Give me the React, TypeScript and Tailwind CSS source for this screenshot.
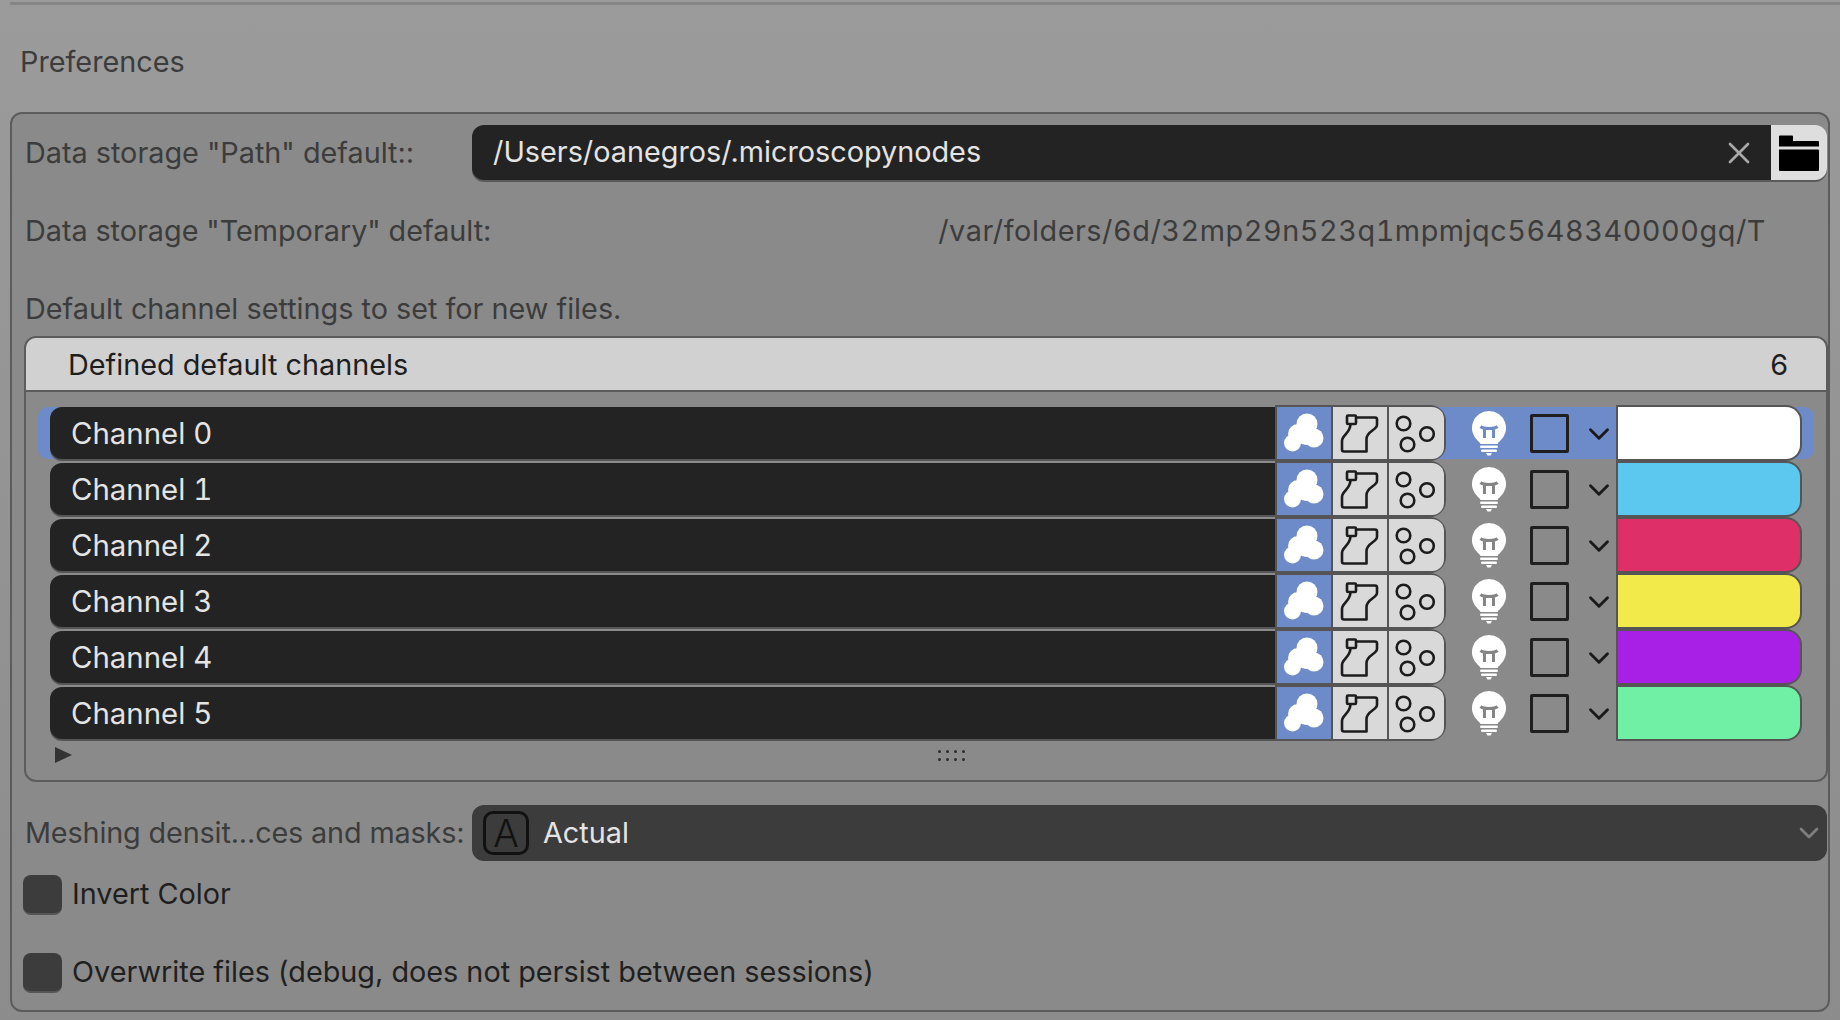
import { X, ChevronDown } from "lucide-react";

const channels = [
  { name: "Channel 0", swatch: "bg-[#ffffff]" },
  { name: "Channel 1", swatch: "bg-[#5cc8ef]" },
  { name: "Channel 2", swatch: "bg-[#de2f68]" },
  { name: "Channel 3", swatch: "bg-[#f2ea4b]" },
  { name: "Channel 4", swatch: "bg-[#a820e6]" },
  { name: "Channel 5", swatch: "bg-[#6ff0a5]" },
];

function VolumeIcon() {
  return (
    <svg width="54" height="52" viewBox="0 0 54 52" fill="#ffffff">
      <circle cx="30" cy="17" r="10.500" />
      <circle cx="15.500" cy="36" r="8.500" />
      <circle cx="37" cy="31" r="9.500" />
      <circle cx="21" cy="27" r="10" />
      <circle cx="29" cy="28" r="10" />
    </svg>
  );
}

function SurfaceIcon() {
  return (
    <svg width="54" height="52" viewBox="0 0 54 52" fill="none" stroke="#1c1c1c" strokeWidth="2.6" strokeLinejoin="round">
      <rect x="14" y="8.5" width="9" height="8.5" rx="1" />
      <path d="M23 10.5H42a2 2 0 0 1 2 2V18c0 5-10.500 6-10.500 14V44.500H11a2 2 0 0 1-2-2V34c0-6 8.500-8 8.500-17" />
    </svg>
  );
}

function PointsIcon() {
  return (
    <svg width="55" height="52" viewBox="0 0 55 52" fill="none" stroke="#1c1c1c" strokeWidth="2.600">
      <circle cx="14.500" cy="16.500" r="6.800" />
      <circle cx="38" cy="27" r="6.800" />
      <circle cx="18.500" cy="37.500" r="6.800" />
    </svg>
  );
}

function BulbIcon({ inner }: { inner: string }) {
  return (
    <svg width="40" height="52" viewBox="0 0 40 52" fill="#ffffff">
      <path d="M20 4a17 17 0 0 1 11 30c-1.500 1.300-2 2-2.500 3h-17c-.5-1-1-1.700-2.500-3A17 17 0 0 1 20 4Z" />
      <rect x="11" y="38.500" width="18" height="2.600" rx="1.300" />
      <rect x="12" y="42.500" width="16" height="2.600" rx="1.300" />
      <path d="M17 46h6l-1.500 2.500h-3Z" />
      <path d="M11.500 19.500c3 2.500 14 2.500 17 0M15.500 21.500V31M24.500 21.500V31" fill="none" stroke={inner} strokeWidth="3" />
    </svg>
  );
}

function FolderIcon() {
  return (
    <svg width="42" height="38" viewBox="0 0 42 38" fill="#000000">
      <path d="M1 2.500a1 1 0 0 1 1-1H14a1 1 0 0 1 1 1V7H40a1 1 0 0 1 1 1v4.500H1Z" />
      <path d="M1 15.500H40a1 1 0 0 1 1 1V36a1 1 0 0 1-1 1H2a1 1 0 0 1-1-1Z" />
    </svg>
  );
}

function ChannelRow({ name, swatch, active }: { name: string; swatch: string; active: boolean }) {
  return (
    <div className={`flex h-[52px] mx-[12px] pl-[12px] pr-[14px] rounded-[10px] ${active ? "bg-[#6d8ac9]" : ""}`}>
      <div className="flex-1 flex items-center pl-[21px] pt-[2px] bg-[#232323] rounded-l-[12px] text-[#e4e4e4] text-[29.4px] tabular-nums shadow-[0_2px_0_#555555]">
        {name}
      </div>
      <div className="flex gap-[2px] bg-[#555555] shadow-[0_0_0_2px_#555555] rounded-r-[14px] ml-[1px]">
        <div className="w-[54px] bg-[#6d8ac9]"><VolumeIcon /></div>
        <div className="w-[54px] bg-[#d9d9d9]"><SurfaceIcon /></div>
        <div className="w-[55px] bg-[#d9d9d9] rounded-r-[12px]"><PointsIcon /></div>
      </div>
      <div className="w-[174px] flex items-center pl-[25px]">
        <BulbIcon inner={active ? "#6d8ac9" : "#858585"} />
        <div className="w-[39px] h-[39px] ml-[21px] border-[3px] border-[#1f1f1f] rounded-[2px]" />
        <ChevronDown size={34} strokeWidth={2} className="ml-[13px] mt-[2px] text-[#1a1a1a]" />
      </div>
      <div className={`w-[182px] rounded-r-[14px] shadow-[0_0_0_2px_#555555] ${swatch}`} />
    </div>
  );
}

export default function App() {
  return (
    <div className="w-[1840px] h-[1020px] overflow-hidden bg-gradient-to-b from-[#9b9b9b] to-[#8c8c8c] text-[#3c3c3c] text-[28.8px] leading-none" style={{ fontFamily: "Inter, 'Liberation Sans', sans-serif" }}>
      <div className="ml-[10px] h-[3px] mt-[2px] bg-[#858585]" />
      <div className="h-[107px] pl-[20px] pt-[43px]">Preferences</div>

      <div className="ml-[10px] mr-[10px] h-[900px] border-2 border-[#5c5c5c] rounded-[12px] bg-[#8a8a8a] pl-[12px] pr-[1px]">
        <div className="flex items-center h-[55px] mt-[11px]">
          <div className="w-[448px] pl-[1px] pt-[1px] whitespace-nowrap">Data storage "Path" default::</div>
          <div className="flex-1 flex items-center justify-between h-[55px] pl-[21px] pr-[14px] bg-[#232323] rounded-l-[12px] text-[#e4e4e4] shadow-[0_2px_0_#5a5a5a]">
            <span>/Users/oanegros/.microscopynodes</span>
            <X size={36} strokeWidth={1.800} className="text-[#a8a8a8]" />
          </div>
          <div className="w-[56px] h-[55px] flex items-center justify-center bg-[#dedede] rounded-r-[12px] shadow-[0_2px_0_#5a5a5a]">
            <FolderIcon />
          </div>
        </div>

        <div className="flex items-center justify-between h-[55px] mt-[23px] pl-[1px] pr-[61px] pt-[1px] tabular-nums">
          <span>Data storage "Temporary" default:</span>
          <span className="tracking-[0.55px]">/var/folders/6d/32mp29n523q1mpmjqc5648340000gq/T</span>
        </div>

        <div className="h-[55px] mt-[23px] pl-[1px] pt-[14px]">Default channel settings to set for new files.</div>

        <div className="border-2 border-[#5c5c5c] rounded-[12px] h-[446px] mr-[-1px] overflow-hidden">
          <div className="flex items-center justify-between h-[54px] pl-[42px] pr-[38px] pt-[2px] bg-[#d1d1d1] border-b-2 border-[#5c5c5c] text-[#1e1e1e]">
            <span>Defined default channels</span>
            <span>6</span>
          </div>
          <div className="flex flex-col gap-[4px] pt-[15px]">
            {channels.map((c, i) => (
              <ChannelRow key={c.name} name={c.name} swatch={c.swatch} active={i === 0} />
            ))}
          </div>
          <div className="relative h-[30px] mt-[5px]">
            <div className="absolute left-[29px] top-[3px] w-0 h-0 border-y-[8px] border-y-transparent border-l-[17px] border-l-[#333333]" />
            <div className="absolute left-[912px] top-[6px] grid grid-cols-4 gap-x-[5px] gap-y-[5px]">
              {Array.from({ length: 8 }).map((_, i) => (
                <span key={i} className="w-[3px] h-[3px] bg-[#2e2e2e] rounded-full" />
              ))}
            </div>
          </div>
        </div>

        <div className="flex items-center h-[56px] mt-[23px]">
          <div className="w-[448px] pl-[1px] whitespace-nowrap tracking-[-0.15px]">Meshing densit...ces and masks:</div>
          <div className="flex-1 flex items-center justify-between h-[56px] pl-[11px] pr-[2px] bg-[#3c3c3c] rounded-[12px] text-[#e4e4e4]">
            <div className="flex items-center">
              <div className="w-[46px] h-[44px] flex items-center justify-center border-[3px] border-[#111111] rounded-[10px] text-[#111111] text-[38px] font-light">A</div>
              <span className="ml-[14px]">Actual</span>
            </div>
            <ChevronDown size={32} strokeWidth={2} className="text-[#7f7f7f]" />
          </div>
        </div>

        <div className="flex items-center h-[41px] mt-[13px] -ml-[1px] text-[#1f1f1f]">
          <div className="w-[39px] h-[40px] bg-[#3c3c3c] border-b-2 border-[#555555] rounded-[8px]" />
          <span className="ml-[10px]">Invert Color</span>
        </div>
        <div className="flex items-center h-[41px] mt-[37px] -ml-[1px] text-[#1f1f1f]">
          <div className="w-[39px] h-[40px] bg-[#3c3c3c] border-b-2 border-[#555555] rounded-[8px]" />
          <span className="ml-[10px]">Overwrite files (debug, does not persist between sessions)</span>
        </div>
      </div>
    </div>
  );
}
